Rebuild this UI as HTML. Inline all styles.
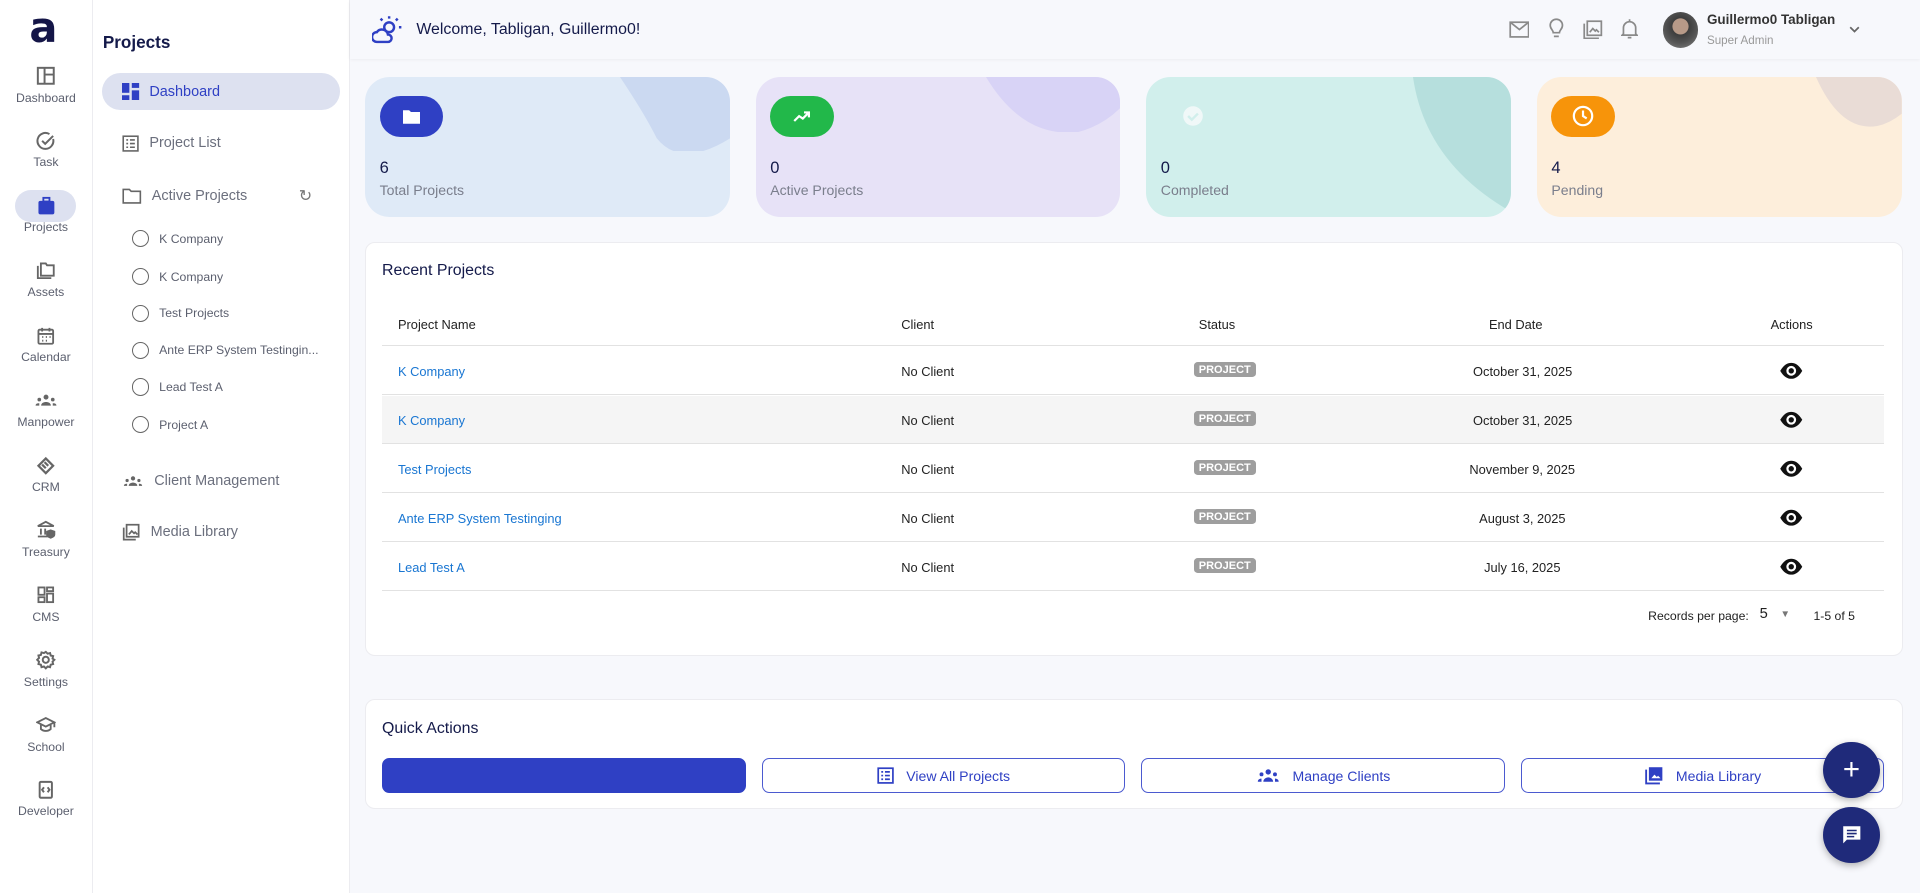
<!DOCTYPE html>
<html><head><meta charset="utf-8"><style>
*{box-sizing:border-box;margin:0;padding:0}
html,body{width:1920px;height:893px;overflow:hidden}
body{font-family:"Liberation Sans",sans-serif;background:#f7f8fc;}
#r{zoom:1.22449;width:1568px;height:730px;position:relative}
.a{position:absolute}
.rail{left:0;top:0;width:76px;height:730px;background:#fff;border-right:1px solid #ececf0}
.ri{position:absolute;left:0;width:75px;text-align:center;font-size:10px;color:#5b5f6e}
.ri svg{display:block;margin:0 auto 4px}
.side{left:76px;top:0;width:210px;height:730px;background:#fff;border-right:1px solid #ececf0}
.si{position:absolute;left:24px;font-size:11.8px;color:#6b6f7d;display:flex;align-items:center;gap:8px}
.sub{position:absolute;left:32px;font-size:10px;color:#5b5f6e;display:flex;align-items:center;gap:8px}
.sub i{width:14px;height:14px;border:1.6px solid #666;border-radius:50%;display:inline-block}
.card{border-radius:20px;overflow:hidden;height:114px;top:63px;width:298px}
.card .ic{position:absolute;left:12px;top:15px;width:52px;height:34px;border-radius:17px;display:flex;align-items:center;justify-content:center}
.card .n{position:absolute;left:12px;top:66px;font-size:13.5px;color:#141a4a}
.card .l{position:absolute;left:12px;top:86px;font-size:11.5px;color:#7a7e8c}
.panel{background:#fff;border:1px solid #ececf0;border-radius:8px;left:298px;width:1256px}
.th{position:absolute;top:259px;font-size:10.5px;color:#222}
.row{position:absolute;left:312px;width:1227px;height:40px;border-bottom:1px solid #e2e2e2;font-size:10.5px;color:#222}
.row span{position:absolute;top:14px}
.chip{background:#9e9e9e;color:#fff;font-size:9px;padding:1px 4px;border-radius:3px;top:13px!important;left:663px;font-weight:bold}
.btn{position:absolute;top:619px;height:29px;width:297px;border:1px solid #4b5ad0;border-radius:6px;color:#2f40c4;font-size:11.5px;display:flex;align-items:center;justify-content:center;gap:10px;background:#fff}
.fab{width:46px;height:46px;border-radius:50%;background:#1f2a7a;box-shadow:0 2px 6px rgba(0,0,0,.3);display:flex;align-items:center;justify-content:center;color:#fff}
</style></head><body><div id="r">
<div class="a rail">
 <div class="a" style="left:24px;top:6px;font-size:34px;font-weight:bold;color:#141547;line-height:34px;font-family:'DejaVu Sans',sans-serif">a</div>
 <div class="ri" style="top:54px"><svg width="16" height="16" viewBox="0 0 16 16" fill="none" stroke="#666" stroke-width="1.6"><rect x="1.5" y="1.5" width="13" height="13"/><path d="M7 1.5v13M7 7h7.5"/></svg>Dashboard</div>
 <div class="ri" style="top:107px"><svg width="16" height="16" viewBox="0 0 16 16" fill="none" stroke="#666" stroke-width="1.6"><path d="M14 6.5A6.5 6.5 0 1 1 11 2.5"/><path d="M5 8l2.5 2.5L14 4"/></svg>Task</div>
 <div class="a" style="left:12px;top:155px;width:50px;height:26px;border-radius:13px;background:#dde1f0"></div>
 <div class="ri" style="top:160px"><svg width="16" height="16" viewBox="0 0 16 16"><rect x="2" y="4" width="13" height="11" rx="1.5" fill="#2f40c4"/><rect x="6" y="1.5" width="5" height="3" fill="none" stroke="#2f40c4" stroke-width="1.5"/></svg>Projects</div>
 <div class="ri" style="top:213px"><svg width="16" height="16" viewBox="0 0 16 16" fill="none" stroke="#666" stroke-width="1.5"><path d="M1.5 4v10h11"/><path d="M4 2h4l1 1.5h5.5v8.5H4z"/></svg>Assets</div>
 <div class="ri" style="top:266px"><svg width="16" height="16" viewBox="0 0 16 16" fill="none" stroke="#666" stroke-width="1.5"><rect x="2" y="3" width="12" height="11.5" rx="1"/><path d="M2 6.5h12M5 1.5v3M11 1.5v3M5 9h1M8 9h1M11 9h1M5 12h1M8 12h1"/></svg>Calendar</div>
 <div class="ri" style="top:319px"><svg width="18" height="16" viewBox="0 0 18 16" fill="#666"><circle cx="9" cy="5" r="2"/><circle cx="3.5" cy="7" r="1.5"/><circle cx="14.5" cy="7" r="1.5"/><path d="M5 12c0-2 2-3 4-3s4 1 4 3zM0.5 12c0-1.5 1-2 3-2v2zM17.5 12c0-1.5-1-2-3-2v2z"/></svg>Manpower</div>
 <div class="ri" style="top:372px"><svg width="16" height="16" viewBox="0 0 16 16" fill="none" stroke="#666" stroke-width="1.8"><path d="M8 2l6 6-6 6-6-6z"/><path d="M5 7l3 3M7 5l3 3"/></svg>CRM</div>
 <div class="ri" style="top:425px"><svg width="16" height="16" viewBox="0 0 16 16" fill="none" stroke="#666" stroke-width="1.5"><path d="M1.5 5L8 1.5 14.5 5zM1.5 13.5h8M4 7v5M7.5 7v5"/><path d="M12 8.5l3 1v2.5c0 1.5-3 2.5-3 2.5s-3-1-3-2.5V9.5z" fill="#666"/></svg>Treasury</div>
 <div class="ri" style="top:478px"><svg width="16" height="16" viewBox="0 0 16 16" fill="none" stroke="#666" stroke-width="1.5"><rect x="2" y="2" width="5" height="6"/><rect x="9" y="2" width="5" height="3"/><rect x="2" y="10" width="5" height="4"/><rect x="9" y="7" width="5" height="7"/></svg>CMS</div>
 <div class="ri" style="top:531px"><svg width="16" height="16" viewBox="0 0 16 16" fill="none" stroke="#666" stroke-width="1.6"><circle cx="8" cy="8" r="2.5"/><path d="M8 1.5l1.5 1.5 2-.5.5 2 2 .5-.5 2L15 8l-1.5 1.5.5 2-2 .5-.5 2-2-.5L8 15l-1.5-1.5-2 .5-.5-2-2-.5.5-2L1 8l1.5-1.5-.5-2 2-.5.5-2 2 .5z"/></svg>Settings</div>
 <div class="ri" style="top:584px"><svg width="16" height="16" viewBox="0 0 16 16" fill="none" stroke="#666" stroke-width="1.5"><path d="M1 6l7-3.5L15 6 8 9.5z"/><path d="M4 8v3.5c2 2 6 2 8 0V8M15 6v4"/></svg>School</div>
 <div class="ri" style="top:637px"><svg width="16" height="16" viewBox="0 0 16 16" fill="none" stroke="#666" stroke-width="1.6"><rect x="3" y="1.5" width="10" height="13" rx="1"/><path d="M6.5 6L5 8l1.5 2M9.5 6L11 8l-1.5 2"/></svg>Developer</div>
</div>
<div class="a side">
 <div class="a" style="left:8px;top:26px;font-size:14px;font-weight:bold;color:#141a4a">Projects</div>
 <div class="a" style="left:7px;top:60px;width:195px;height:30px;border-radius:15px;background:#dde1f0"></div>
 <div class="si" style="top:68px;color:#2f40c4"><svg width="14" height="14" viewBox="0 0 14 14" fill="#2f40c4"><rect x="0" y="0" width="6" height="8"/><rect x="8" y="0" width="6" height="4"/><rect x="0" y="10" width="6" height="4"/><rect x="8" y="6" width="6" height="8"/></svg>Dashboard</div>
 <div class="si" style="top:110px"><svg width="14" height="14" viewBox="0 0 14 14" fill="none" stroke="#666" stroke-width="1.3"><rect x="1" y="1" width="12" height="12"/><path d="M3.5 4h1.5M6.5 4h4M3.5 7h1.5M6.5 7h4M3.5 10h1.5M6.5 10h4"/></svg>Project List</div>
 <div class="si" style="top:153px"><svg width="16" height="14" viewBox="0 0 16 14" fill="none" stroke="#666" stroke-width="1.3"><path d="M1 2h5l1.5 1.5H15V13H1z"/></svg>Active Projects</div>
 <div class="a" style="left:168px;top:152px;font-size:13px;color:#777">↻</div>
 <div class="sub" style="top:188px"><i></i>K Company</div>
 <div class="sub" style="top:219px"><i></i>K Company</div>
 <div class="sub" style="top:249px"><i></i>Test Projects</div>
 <div class="sub" style="top:279px"><i></i>Ante ERP System Testingin...</div>
 <div class="sub" style="top:309px"><i></i>Lead Test A</div>
 <div class="sub" style="top:340px"><i></i>Project A</div>
 <div class="si" style="top:386px"><svg width="18" height="14" viewBox="0 0 18 16" fill="#666"><circle cx="9" cy="5" r="2"/><circle cx="3.5" cy="7" r="1.5"/><circle cx="14.5" cy="7" r="1.5"/><path d="M5 12c0-2 2-3 4-3s4 1 4 3zM0.5 12c0-1.5 1-2 3-2v2zM17.5 12c0-1.5-1-2-3-2v2z"/></svg>Client Management</div>
 <div class="si" style="top:427px"><svg width="15" height="15" viewBox="0 0 16 16" fill="none" stroke="#666" stroke-width="1.5"><path d="M1.5 4v10.5H12"/><rect x="4" y="1.5" width="10.5" height="10.5"/><path d="M6 10l2.5-3 2 2 1-1 2 2" /></svg>Media Library</div>
</div>
<div class="a" style="left:286px;top:0;width:1282px;height:48px;background:#f7f8fc;box-shadow:0 1px 3px rgba(0,0,0,.06)">
 <svg class="a" style="left:18px;top:12px" width="26" height="24" viewBox="0 0 26 24" fill="none" stroke="#2f40c4" stroke-width="2"><circle cx="14" cy="10" r="4"/><path d="M14 1v2M21 3l-1.5 1.5M24 10h-2M7 3l1.5 1.5"/><path d="M4 22a4 4 0 0 1 0-8 5 5 0 0 1 9 2 3 3 0 0 1 0 6z"/></svg>
 <div class="a" style="left:54px;top:17px;font-size:13px;color:#141a4a">Welcome, Tabligan, Guillermo0!</div>
 <svg class="a" style="left:946px;top:17px" width="17" height="14" viewBox="0 0 17 14" fill="none" stroke="#8a8a8a" stroke-width="1.4"><rect x="1" y="1" width="15" height="12"/><path d="M1 1l7.5 6L16 1"/></svg>
 <svg class="a" style="left:979px;top:15px" width="12" height="18" viewBox="0 0 12 18" fill="none" stroke="#8a8a8a" stroke-width="1.4"><path d="M3.5 12c0-2-2.5-3-2.5-6a5 5 0 0 1 10 0c0 3-2.5 4-2.5 6zM4 15h4"/></svg>
 <svg class="a" style="left:1007px;top:16px" width="16" height="16" viewBox="0 0 16 16" fill="none" stroke="#8a8a8a" stroke-width="1.4"><path d="M1 3v12h12"/><rect x="3.5" y="1" width="11.5" height="11.5"/><path d="M5.5 10l2.5-3 2 2 1-1 2 2"/></svg>
 <svg class="a" style="left:1038px;top:15px" width="14" height="18" viewBox="0 0 14 18" fill="none" stroke="#8a8a8a" stroke-width="1.4"><path d="M2 13V8a5 5 0 0 1 10 0v5l1 1H1zM5.5 16h3M7 1v2"/></svg>
 <div class="a" style="left:1072px;top:10px;width:29px;height:29px;border-radius:50%;background:radial-gradient(circle at 50% 40%,#b89a88 0 28%,#3d3d3d 30%,#555 60%,#888 100%)"></div>
 <div class="a" style="left:1108px;top:10px;font-size:11px;font-weight:bold;color:#333">Guillermo0 Tabligan</div>
 <div class="a" style="left:1108px;top:28px;font-size:9.5px;color:#999">Super Admin</div>
 <svg class="a" style="left:1224px;top:21px" width="9" height="6" viewBox="0 0 9 6" fill="none" stroke="#666" stroke-width="1.4"><path d="M1 1l3.5 3.5L8 1"/></svg>
</div>
<div class="a card" style="left:298px;background:#dfeaf7"><svg class="a" style="right:0;top:0" width="90" height="60" viewBox="0 0 90 60"><path d="M0 0 Q20 30 30 50 Q50 75 90 50 V0z" fill="#cbd9f1"/></svg><div class="ic" style="background:#2f40c4"><svg width="14" height="12" viewBox="0 0 14 12" fill="#fff"><path d="M0 1h5l1.5 1.5H14V12H0z"/></svg></div><div class="n">6</div><div class="l">Total Projects</div></div>
<div class="a card" style="left:617px;background:#e7e2f7"><svg class="a" style="right:0;top:0" width="110" height="45" viewBox="0 0 110 45"><path d="M0 0 Q30 50 75 45 Q95 40 110 25 V0z" fill="#d8d3f6"/></svg><div class="ic" style="background:#22b84a"><svg width="14" height="10" viewBox="0 0 14 10" fill="none" stroke="#fff" stroke-width="1.8"><path d="M1 9l4-4 3 2 5-5M9 2h4v4"/></svg></div><div class="n">0</div><div class="l">Active Projects</div></div>
<div class="a card" style="left:936px;background:#d1efec"><svg class="a" style="right:0;top:0" width="80" height="114" viewBox="0 0 80 114"><path d="M0 0 Q10 70 80 110 V0z" fill="#b6dfdd"/></svg><div class="ic" style="background:transparent"><svg width="18" height="18" viewBox="0 0 18 18"><circle cx="9" cy="9" r="8" fill="#f0f8f8"/><path d="M5 9l3 3 5-5" stroke="#d1efec" stroke-width="2" fill="none"/></svg></div><div class="n">0</div><div class="l">Completed</div></div>
<div class="a card" style="left:1255px;background:#fdeedb"><svg class="a" style="right:0;top:0" width="70" height="50" viewBox="0 0 70 50"><path d="M0 0 Q20 45 50 40 Q60 38 70 30 V0z" fill="#e9dcd6"/></svg><div class="ic" style="background:#f7940a"><svg width="18" height="18" viewBox="0 0 18 18" fill="none" stroke="#fff" stroke-width="1.8"><circle cx="9" cy="9" r="7.5"/><path d="M9 4.5V9l3 2"/></svg></div><div class="n">4</div><div class="l">Pending</div></div>

<div class="a panel" style="top:198px;height:338px"></div>
<div class="a" style="left:312px;top:214px;font-size:13px;color:#141a4a;font-weight:500">Recent Projects</div>
<div class="th" style="left:325px">Project Name</div><div class="th" style="left:736px">Client</div><div class="th" style="left:979px">Status</div><div class="th" style="left:1216px">End Date</div><div class="th" style="left:1446px">Actions</div>
<div class="a" style="left:312px;top:282px;width:1227px;border-top:1px solid #e2e2e2"></div>
<div class="row" style="top:283px"><span style="left:13px;color:#1976d2">K Company</span><span style="left:424px">No Client</span><span class="chip">PROJECT</span><span style="left:891px">October 31, 2025</span></div>
<div class="row" style="top:323px;background:#f5f5f5"><span style="left:13px;color:#1976d2">K Company</span><span style="left:424px">No Client</span><span class="chip">PROJECT</span><span style="left:891px">October 31, 2025</span></div>
<div class="row" style="top:363px"><span style="left:13px;color:#1976d2">Test Projects</span><span style="left:424px">No Client</span><span class="chip">PROJECT</span><span style="left:888px">November 9, 2025</span></div>
<div class="row" style="top:403px"><span style="left:13px;color:#1976d2">Ante ERP System Testinging</span><span style="left:424px">No Client</span><span class="chip">PROJECT</span><span style="left:896px">August 3, 2025</span></div>
<div class="row" style="top:443px"><span style="left:13px;color:#1976d2">Lead Test A</span><span style="left:424px">No Client</span><span class="chip">PROJECT</span><span style="left:900px">July 16, 2025</span></div>
<svg class="a" style="left:1453px;top:295px" width="20" height="180" viewBox="0 0 20 180"><g id="e"><path d="M1 8C4 3 7 1.5 10 1.5S16 3 19 8C16 13 13 14.5 10 14.5S4 13 1 8z" fill="#111"/><circle cx="10" cy="8" r="4" fill="#fff"/><circle cx="10" cy="8" r="2.2" fill="#111"/></g><use href="#e" y="40"/><use href="#e" y="80"/><use href="#e" y="120"/><use href="#e" y="160"/></svg>
<div class="a" style="left:1346px;top:497px;font-size:10px;color:#222">Records per page:</div>
<div class="a" style="left:1437px;top:495px;font-size:12px;color:#222">5</div>
<div class="a" style="left:1454px;top:497px;font-size:8px;color:#777">▼</div>
<div class="a" style="left:1481px;top:497px;font-size:10px;color:#222">1-5 of 5</div>

<div class="a panel" style="top:571px;height:90px"></div>
<div class="a" style="left:312px;top:588px;font-size:13px;color:#141a4a">Quick Actions</div>
<div class="btn" style="left:312px;background:#2f40c4;border-color:#2f40c4"></div>
<div class="btn" style="left:622px"><svg width="14" height="14" viewBox="0 0 14 14" fill="none" stroke="#2f40c4" stroke-width="1.4"><rect x="1" y="1" width="12" height="12"/><path d="M3.5 4h1.5M6.5 4h4M3.5 7h1.5M6.5 7h4M3.5 10h1.5M6.5 10h4"/></svg>View All Projects</div>
<div class="btn" style="left:932px"><svg width="20" height="14" viewBox="0 0 18 14" fill="#2f40c4"><circle cx="9" cy="4" r="2.2"/><circle cx="3.5" cy="6" r="1.6"/><circle cx="14.5" cy="6" r="1.6"/><path d="M5 12c0-2 2-3.5 4-3.5s4 1.5 4 3.5zM0.5 12c0-1.5 1-2.5 3-2.5v2.5zM17.5 12c0-1.5-1-2.5-3-2.5v2.5z"/></svg>Manage Clients</div>
<div class="btn" style="left:1242px"><svg width="16" height="16" viewBox="0 0 16 16" fill="#2f40c4"><path d="M1 3h1.5v10.5H13V15H1z"/><rect x="4" y="1" width="11" height="11"/><path d="M6 10l2.5-3 2 2 1-1 2 2z" fill="#fff"/></svg>Media Library</div>
<div class="a fab" style="left:1489px;top:606px;font-size:24px;font-weight:300">+</div>
<div class="a fab" style="left:1489px;top:659px"><svg width="16" height="16" viewBox="0 0 16 16"><path d="M1 1h14v11H4l-3 3z" fill="#fff"/><path d="M4 4.5h8M4 7h8M4 9.5h6" stroke="#1f2a7a" stroke-width="1.3"/></svg></div>
</div></body></html>
